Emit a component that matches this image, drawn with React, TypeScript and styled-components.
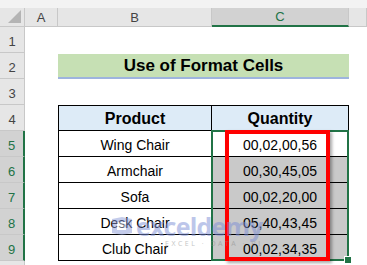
import React from 'react'
import styled, { createGlobalStyle, css } from 'styled-components'

const GlobalStyle = createGlobalStyle`
  html, body {
    margin: 0;
    padding: 0;
    background: #ffffff;
  }
  body {
    font-family: "Liberation Sans", Arial, sans-serif;
    overflow: hidden;
  }
`

const rows = [
  { name: 'Wing Chair', qty: '00,02,00,56' },
  { name: 'Armchair', qty: '00,30,45,05' },
  { name: 'Sofa', qty: '00,02,20,00' },
  { name: 'Desk Chair', qty: '05,40,43,45' },
  { name: 'Club Chair', qty: '00,02,34,35' },
]

// grid row 1 is the column header strip, so sheet row n sits on grid row n + 1
const App = () => {
  return (
    <>
      <GlobalStyle />
      <Window>
        <TopStrip />
        <Sheet>
          <Corner>
            <CornerTriangle />
          </Corner>
          <ColHead col={2}>A</ColHead>
          <ColHead col={3}>B</ColHead>
          <ColHead col={4} active>C</ColHead>
          <ColHead col={5} />

          {Array.from({ length: 10 }, (_, i) => (
            <RowHead key={i} row={i + 2} active={i + 1 >= 5 && i + 1 <= 9}>
              {i + 1}
            </RowHead>
          ))}

          <Title>Use of Format Cells</Title>

          <HeadCell row={5} col={3} first>Product</HeadCell>
          <HeadCell row={5} col={4}>Quantity</HeadCell>

          {rows.map((r, i) => (
            <React.Fragment key={r.name}>
              <Cell row={i + 6} col={3} first>{r.name}</Cell>
              <Cell row={i + 6} col={4} shaded={i > 0}>{r.qty}</Cell>
            </React.Fragment>
          ))}

          <Selection>
            <RedBox />
            <FillHandle />
          </Selection>

          <Watermark>
            <WmRow>
              <WmLogo viewBox="0 0 24 18">
                <path d="M2 2 L12 0 L22 2 L22 16 L12 18 L2 16 Z" fill="#8a9ad8" />
                <path d="M7 5 H16 V7.5 H10 V8 H15 V10 H10 V10.5 H16 V13 H7 Z" fill="#ffffff" />
              </WmLogo>
              <WmName>exceldemy</WmName>
            </WmRow>
            <WmTag>EXCEL · DATA · BI</WmTag>
          </Watermark>
        </Sheet>
      </Window>
    </>
  )
}

const Window = styled.div`
  width: 367px;
  height: 265px;
  overflow: hidden;
  background: #ffffff;
`

const TopStrip = styled.div`
  height: 8px;
  background: #f3f3f3;
`

const Sheet = styled.div`
  position: relative;
  display: grid;
  grid-template-columns: 25px 33px 154px 137px 18px;
  grid-template-rows: 19px repeat(10, 26px);
`

const Corner = styled.div`
  grid-row: 1;
  grid-column: 1;
  background: #e6e6e6;
  border-right: 1px solid #c8c8c8;
  border-bottom: 1px solid #c8c8c8;
  position: relative;
`

const CornerTriangle = styled.div`
  position: absolute;
  right: 3px;
  bottom: 3px;
  width: 0;
  height: 0;
  border-left: 13px solid transparent;
  border-bottom: 13px solid #b4b4b4;
`

const ColHead = styled.div<{ col: number; active?: boolean }>`
  grid-row: 1;
  grid-column: ${p => p.col};
  display: flex;
  align-items: center;
  justify-content: center;
  font-size: 13px;
  color: #444444;
  background: #e6e6e6;
  border-right: 1px solid #c8c8c8;
  border-bottom: 1px solid #c8c8c8;
  ${p =>
    p.active &&
    css`
      background: #d2d2d2;
      color: #217346;
      border-bottom: 2px solid #217346;
    `}
`

const RowHead = styled.div<{ row: number; active?: boolean }>`
  grid-row: ${p => p.row};
  grid-column: 1;
  display: flex;
  align-items: flex-end;
  justify-content: center;
  padding-bottom: 3px;
  box-sizing: border-box;
  font-size: 13px;
  color: #444444;
  background: #e6e6e6;
  border-right: 1px solid #c8c8c8;
  border-bottom: 1px solid #c8c8c8;
  ${p =>
    p.active &&
    css`
      background: #d2d2d2;
      color: #217346;
      border-right: 2px solid #217346;
    `}
`

const Title = styled.div`
  grid-row: 3;
  grid-column: 3 / 5;
  margin-top: 1px;
  display: flex;
  align-items: center;
  justify-content: center;
  background: #c6e0b4;
  border-bottom: 2px solid #9eb4de;
  font-size: 17px;
  font-weight: bold;
  color: #000000;
`

const cellBase = css<{ row: number; col: number; first?: boolean }>`
  grid-row: ${p => p.row};
  grid-column: ${p => p.col};
  display: flex;
  align-items: center;
  justify-content: center;
  padding-top: 2px;
  box-sizing: border-box;
  color: #000000;
  border-right: 1px solid #000000;
  border-bottom: 1px solid #000000;
  ${p => p.first && 'border-left: 1px solid #000000;'}
`

const HeadCell = styled.div<{ row: number; col: number; first?: boolean }>`
  ${cellBase}
  border-top: 1px solid #000000;
  background: #ddebf7;
  font-size: 16px;
  font-weight: bold;
`

const Cell = styled.div<{ row: number; col: number; first?: boolean; shaded?: boolean }>`
  ${cellBase}
  font-size: 14px;
  background: ${p => (p.shaded ? '#c9c9c9' : '#ffffff')};
`

const Selection = styled.div`
  grid-row: 6 / 11;
  grid-column: 4;
  position: relative;
  border: 2px solid #217346;
  margin: -1px 0 0 -1px;
`

const RedBox = styled.div`
  position: absolute;
  top: -2px;
  bottom: -2px;
  left: 12px;
  width: 105px;
  box-sizing: border-box;
  border: 4px solid #ff0000;
  box-shadow: 2px 2px 3px rgba(0, 0, 0, 0.35);
`

const FillHandle = styled.div`
  position: absolute;
  right: -5px;
  bottom: -5px;
  width: 6px;
  height: 6px;
  background: #217346;
  border: 1px solid #ffffff;
`

const Watermark = styled.div`
  position: absolute;
  left: 110px;
  top: 206px;
  display: flex;
  flex-direction: column;
  align-items: flex-end;
  opacity: 0.5;
  pointer-events: none;
`

const WmRow = styled.div`
  display: flex;
  align-items: center;
  gap: 2px;
`

const WmLogo = styled.svg`
  width: 24px;
  height: 18px;
`

const WmName = styled.span`
  font-family: "Open Sans", sans-serif;
  font-size: 25px;
  font-weight: bold;
  color: #7d8fd6;
  letter-spacing: -0.8px;
  line-height: 24px;
`

const WmTag = styled.span`
  font-family: "Open Sans", sans-serif;
  font-size: 7px;
  letter-spacing: 2.5px;
  color: #8a8a8a;
  margin-top: 1px;
`

export default App
